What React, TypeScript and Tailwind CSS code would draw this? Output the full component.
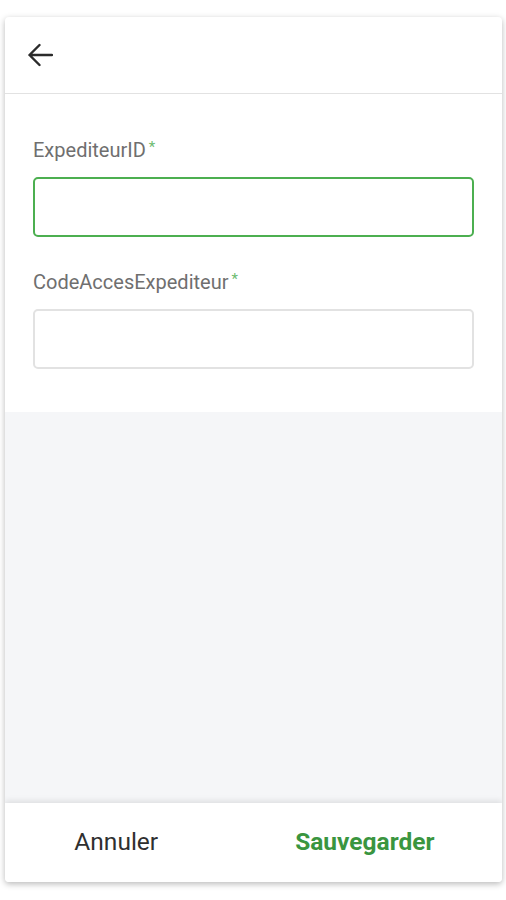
import React from "react";

function BackArrow(): JSX.Element {
    return (
        <svg width="26" height="24" viewBox="0 0 26 24" fill="none">
            <path
                d="M25 12H2.5M12.5 2L2.5 12l10 10"
                stroke="#2b2b2b"
                strokeWidth="2.4"
                strokeLinecap="round"
                strokeLinejoin="round"
            />
        </svg>
    );
}

type FieldProps = { label: string; focused?: boolean };

function Field({ label, focused }: FieldProps): JSX.Element {
    return (
        <div className="flex flex-col">
            <label className="text-[20px] leading-[26px] text-[#6f6f6f]">
                {label}
                <span className="ml-[3px] align-top text-[15px] leading-[20px] text-[#6dbb70]">*</span>
            </label>
            <input
                className={`mt-[14px] h-[60px] w-full rounded-[5px] bg-white px-3 outline-none ${
                    focused
                        ? "border-2 border-[#4caf50]"
                        : "border-2 border-[#e2e2e2]"
                }`}
            />
        </div>
    );
}

export default function App(): JSX.Element {
    return (
        <div className="h-[900px] bg-white pt-[17px] pl-[5px] pr-[4px] font-['Roboto',sans-serif]">
            <div className="flex h-[865px] flex-col overflow-hidden rounded-[4px] bg-white shadow-[0_2px_6px_rgba(0,0,0,0.28)]">
                <header className="flex h-[77px] shrink-0 items-center border-b border-[#e2e2e2] pl-[22px]">
                    <BackArrow />
                </header>

                <section className="flex shrink-0 flex-col gap-[32px] bg-white px-[28px] pt-[43px] pb-[43px]">
                    <Field label="ExpediteurID" focused />
                    <Field label="CodeAccesExpediteur" />
                </section>

                <div className="flex-1 bg-[#f5f6f8]" />

                <footer className="grid h-[79px] shrink-0 grid-cols-2 bg-white shadow-[0_-2px_6px_rgba(0,0,0,0.1)]">
                    <button className="pr-[26px] text-[24.5px] text-[#2f2f2f]">
                        Annuler
                    </button>
                    <button className="pr-[26px] text-[24.5px] font-bold text-[#3a953f]">
                        Sauvegarder
                    </button>
                </footer>
            </div>
        </div>
    );
}
